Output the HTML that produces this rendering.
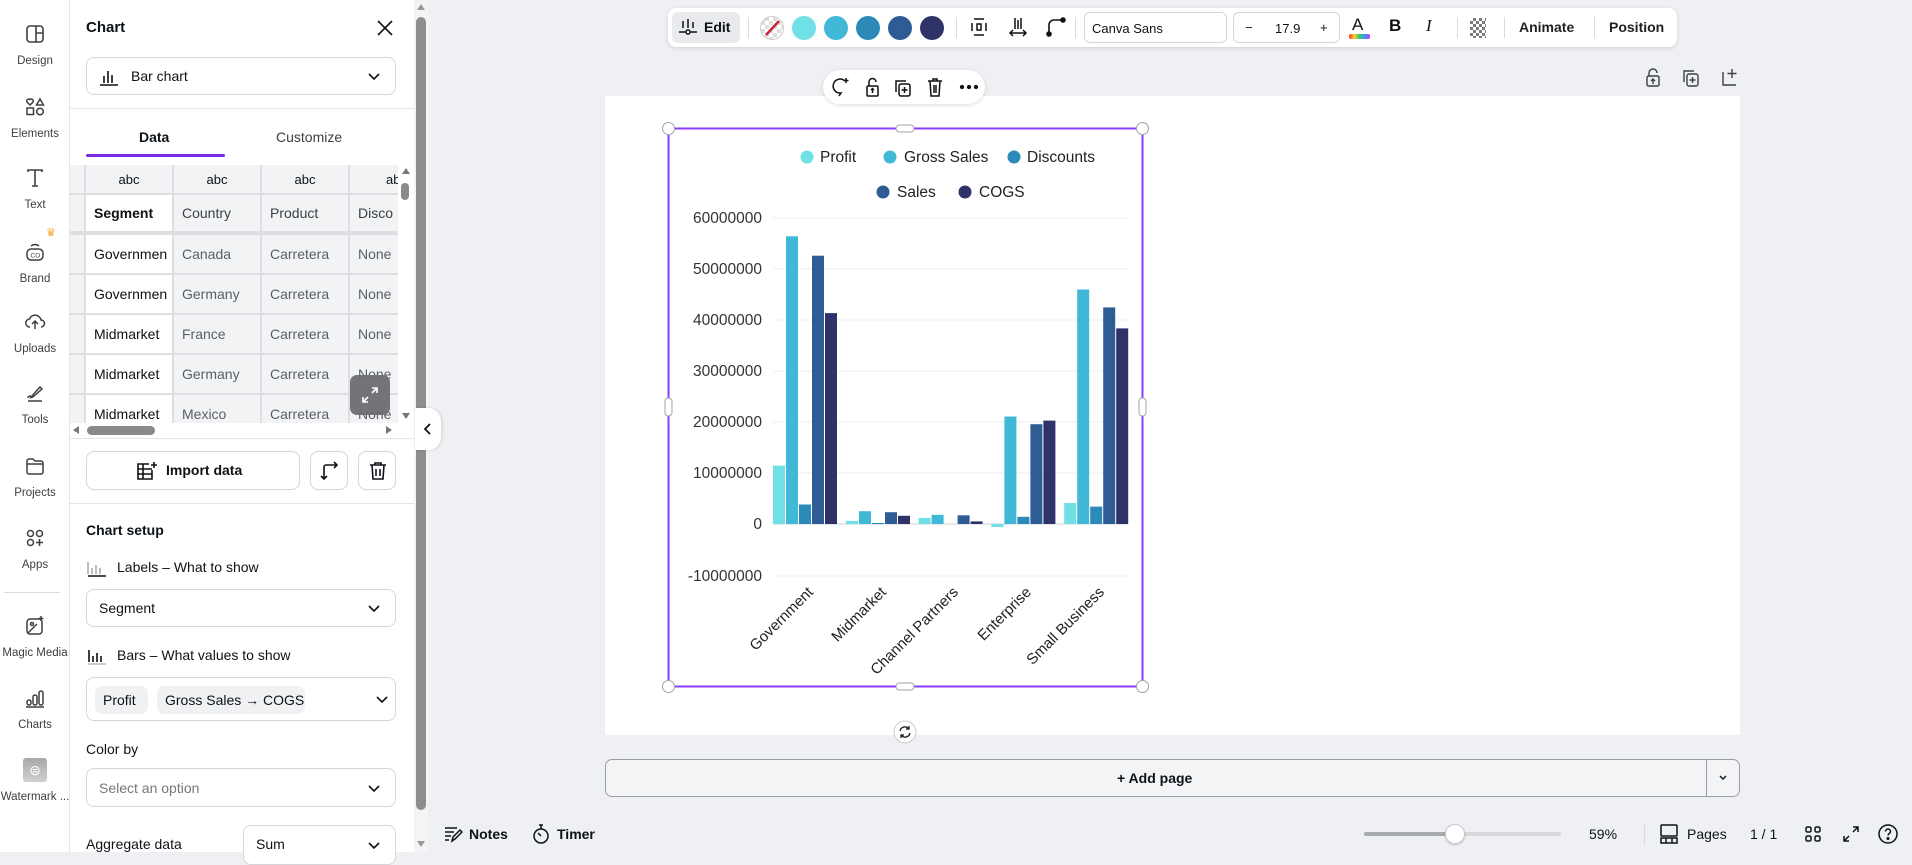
<!DOCTYPE html>
<html><head><meta charset="utf-8">
<style>
*{box-sizing:border-box;margin:0;padding:0}
body{width:1912px;height:852px;overflow:hidden;background:#eef0f3;font-family:"Liberation Sans",sans-serif;color:#0d1216;position:relative}
.abs{position:absolute}
.rail{left:0;top:0;width:70px;height:852px;background:#fff;border-right:1px solid #e3e5e8}
.ri{position:absolute;left:0;width:70px;text-align:center;font-size:11.5px;color:#3c4043}
.ri svg{display:block;margin:0 auto 9px}
.panel{left:70px;top:0;width:358px;height:852px;background:#fff}
.dd{position:absolute;border:1px solid #d4d6da;border-radius:8px;background:#fff;font-size:14px}
.chev{position:absolute;right:14px;top:50%;margin-top:-5px}
.tbl{position:absolute;left:70px;top:165px;width:328px;height:258px;overflow:hidden;background:#f2f3f5}
.cell{position:absolute;border-right:2px solid #dcdee2;border-bottom:2px solid #dcdee2;font-size:14px;color:#5a5f66;padding-left:8px;display:flex;align-items:center;white-space:nowrap;overflow:hidden}
.btn{position:absolute;border:1px solid #d4d6da;border-radius:8px;background:#fff}
.lbl{position:absolute;font-size:14px;color:#0d1216}
.tb{left:668px;top:8px;width:1009px;height:39px;background:#fff;border-radius:8px;box-shadow:0 1px 4px rgba(0,0,0,.15)}
.sw{position:absolute;top:16px;width:24px;height:24px;border-radius:50%}
.sep{position:absolute;top:17px;width:1px;height:21px;background:#d8dadd}
.t{position:absolute;font-size:14px;color:#0d1216}
</style></head><body>

<div class="abs rail">
 <div class="ri" style="top:22px"><svg width="24" height="24" viewBox="0 0 24 24" fill="none" stroke="#3c4043" stroke-width="1.6"><rect x="4" y="4" width="16" height="16" rx="3"/><path d="M13 4v16M13 11h7"/></svg>Design</div>
 <div class="ri" style="top:95px"><svg width="24" height="24" viewBox="0 0 24 24" fill="none" stroke="#3c4043" stroke-width="1.5"><path d="M7 10l-3-3a2 2 0 013-2.5A2 2 0 0110 7z"/><path d="M17 4l3.5 6h-7z"/><rect x="4" y="13" width="6.5" height="6.5"/><circle cx="17" cy="16.5" r="3.3"/></svg>Elements</div>
 <div class="ri" style="top:166px"><svg width="24" height="24" viewBox="0 0 24 24" fill="none" stroke="#3c4043" stroke-width="1.6"><path d="M5 6V4h14v2M12 4v16M9 20h6"/></svg>Text</div>
 <div class="ri" style="top:240px"><svg width="24" height="24" viewBox="0 0 24 24" fill="none" stroke="#3c4043" stroke-width="1.5"><rect x="4" y="9" width="16" height="11" rx="4"/><path d="M8 6a6 6 0 018 0"/><text x="7.5" y="17.5" font-size="6.5" fill="#3c4043" stroke="none" font-family="Liberation Sans">CO</text></svg>Brand</div>
 <div class="abs" style="left:46px;top:226px;color:#f5a623;font-size:11px">♛</div>
 <div class="ri" style="top:310px"><svg width="24" height="24" viewBox="0 0 24 24" fill="none" stroke="#3c4043" stroke-width="1.5"><path d="M7 17a4 4 0 01-.5-8 6 6 0 0111.5 1 3.5 3.5 0 010 7M12 19v-7M9 14l3-3 3 3"/></svg>Uploads</div>
 <div class="ri" style="top:381px"><svg width="24" height="24" viewBox="0 0 24 24" fill="none" stroke="#3c4043" stroke-width="1.5"><path d="M9 15l8-9 2 2-9 8-2 .5zM5 20h14M5 17c0-2 2-2 3-2"/></svg>Tools</div>
 <div class="ri" style="top:454px"><svg width="24" height="24" viewBox="0 0 24 24" fill="none" stroke="#3c4043" stroke-width="1.5"><path d="M4 7a2 2 0 012-2h4l2 2h6a2 2 0 012 2v9a2 2 0 01-2 2H6a2 2 0 01-2-2zM4 10h16"/></svg>Projects</div>
 <div class="ri" style="top:526px"><svg width="24" height="24" viewBox="0 0 24 24" fill="none" stroke="#3c4043" stroke-width="1.5"><circle cx="7.5" cy="7.5" r="3"/><circle cx="16.5" cy="7.5" r="3"/><circle cx="7.5" cy="16.5" r="3"/><path d="M16.5 13v7M13 16.5h7"/></svg>Apps</div>
 <div class="abs" style="left:4px;top:592px;width:56px;height:1px;background:#d8dadd"></div>
 <div class="ri" style="top:614px"><svg width="24" height="24" viewBox="0 0 24 24" fill="none" stroke="#3c4043" stroke-width="1.5"><rect x="4" y="5" width="15" height="15" rx="3"/><circle cx="9" cy="10" r="1.5"/><path d="M5 19l9-9M18 2v5M15.5 4.5h5"/></svg>Magic Media</div>
 <div class="ri" style="top:686px"><svg width="24" height="24" viewBox="0 0 24 24" fill="none" stroke="#3c4043" stroke-width="1.5"><rect x="4" y="14" width="4" height="5" rx="2"/><rect x="10" y="9" width="4" height="10" rx="2"/><rect x="16" y="5" width="4" height="14" rx="2"/><path d="M3 21h18"/></svg>Charts</div>
 <div class="ri" style="top:758px"><div style="width:24px;height:24px;margin:0 auto 9px;background:linear-gradient(#a8a8a8,#d0d0d0);border-radius:3px;color:#fff;font-size:14px;line-height:24px">⊜</div>Watermark ...</div>
</div>

<div class="abs panel"></div>
<div class="t" style="left:86px;top:19px;font-weight:bold;font-size:15px">Chart</div>
<svg class="abs" style="left:376px;top:19px" width="18" height="18" viewBox="0 0 18 18" stroke="#0d1216" stroke-width="1.6"><path d="M2 2l14 14M16 2L2 16"/></svg>
<div class="dd" style="left:86px;top:57px;width:310px;height:38px">
 <svg class="abs" style="left:12px;top:10px" width="20" height="18" viewBox="0 0 20 18" stroke="#0d1216" stroke-width="1.6" fill="none"><path d="M1 17h18M5 15V8M9 15V3M13 15V7"/></svg>
 <span class="abs" style="left:44px;top:10px">Bar chart</span>
 <svg class="chev" width="14" height="10" viewBox="0 0 14 10" fill="none" stroke="#0d1216" stroke-width="1.6"><path d="M2 3l5 5 5-5"/></svg>
</div>
<div class="abs" style="left:70px;top:108px;width:344px;height:1px;background:#e3e5e8"></div>
<div class="t" style="left:139px;top:129px;font-weight:bold">Data</div>
<div class="t" style="left:276px;top:129px;color:#3c4043">Customize</div>
<div class="abs" style="left:86px;top:154px;width:139px;height:3px;background:#7d2ae8;border-radius:2px"></div>

<div class="tbl">
 <div class="cell" style="left:0;top:0;width:16px;height:30px;background:#f2f3f5"></div>
 <div class="cell" style="left:16px;top:0;width:88px;height:30px;justify-content:center;padding:0;color:#0d1216;font-size:13px">abc</div>
 <div class="cell" style="left:104px;top:0;width:88px;height:30px;justify-content:center;padding:0;color:#0d1216;font-size:13px">abc</div>
 <div class="cell" style="left:192px;top:0;width:88px;height:30px;justify-content:center;padding:0;color:#0d1216;font-size:13px">abc</div>
 <div class="cell" style="left:280px;top:0;width:60px;height:30px;justify-content:flex-start;padding-left:36px;color:#0d1216;font-size:13px">ab</div>
 <div class="cell" style="left:0;top:30px;width:16px;height:38px"></div>
 <div class="cell" style="left:16px;top:30px;width:88px;height:38px;background:#fff;color:#0d1216;font-weight:bold">Segment</div>
 <div class="cell" style="left:104px;top:30px;width:88px;height:38px;color:#3c4043">Country</div>
 <div class="cell" style="left:192px;top:30px;width:88px;height:38px;color:#3c4043">Product</div>
 <div class="cell" style="left:280px;top:30px;width:60px;height:38px;color:#3c4043">Disco</div>
 <div class="abs" style="left:0;top:68px;width:340px;height:2px;background:#dcdee2"></div>
 <div class="cell" style="left:0;top:70px;width:16px;height:40px"></div><div class="cell" style="left:16px;top:70px;width:88px;height:40px;background:#fff;color:#0d1216">Governmen</div><div class="cell" style="left:104px;top:70px;width:88px;height:40px">Canada</div><div class="cell" style="left:192px;top:70px;width:88px;height:40px">Carretera</div><div class="cell" style="left:280px;top:70px;width:60px;height:40px">None</div>
 <div class="cell" style="left:0;top:110px;width:16px;height:40px"></div><div class="cell" style="left:16px;top:110px;width:88px;height:40px;background:#fff;color:#0d1216">Governmen</div><div class="cell" style="left:104px;top:110px;width:88px;height:40px">Germany</div><div class="cell" style="left:192px;top:110px;width:88px;height:40px">Carretera</div><div class="cell" style="left:280px;top:110px;width:60px;height:40px">None</div>
 <div class="cell" style="left:0;top:150px;width:16px;height:40px"></div><div class="cell" style="left:16px;top:150px;width:88px;height:40px;background:#fff;color:#0d1216">Midmarket</div><div class="cell" style="left:104px;top:150px;width:88px;height:40px">France</div><div class="cell" style="left:192px;top:150px;width:88px;height:40px">Carretera</div><div class="cell" style="left:280px;top:150px;width:60px;height:40px">None</div>
 <div class="cell" style="left:0;top:190px;width:16px;height:40px"></div><div class="cell" style="left:16px;top:190px;width:88px;height:40px;background:#fff;color:#0d1216">Midmarket</div><div class="cell" style="left:104px;top:190px;width:88px;height:40px">Germany</div><div class="cell" style="left:192px;top:190px;width:88px;height:40px">Carretera</div><div class="cell" style="left:280px;top:190px;width:60px;height:40px">None</div>
 <div class="cell" style="left:0;top:230px;width:16px;height:40px"></div><div class="cell" style="left:16px;top:230px;width:88px;height:40px;background:#fff;color:#0d1216">Midmarket</div><div class="cell" style="left:104px;top:230px;width:88px;height:40px">Mexico</div><div class="cell" style="left:192px;top:230px;width:88px;height:40px">Carretera</div><div class="cell" style="left:280px;top:230px;width:60px;height:40px">None</div>
</div>
<div class="abs" style="left:398px;top:165px;width:16px;height:258px;background:#fff"></div>
<div class="abs" style="left:402px;top:168px;width:0;height:0;border:4px solid transparent;border-bottom:6px solid #777;border-top:0"></div>
<div class="abs" style="left:401px;top:183px;width:8px;height:17px;border-radius:4px;background:#8a8a8a"></div>
<div class="abs" style="left:402px;top:413px;width:0;height:0;border:4px solid transparent;border-top:6px solid #777;border-bottom:0"></div>
<div class="abs" style="left:350px;top:375px;width:40px;height:40px;border-radius:7px;background:#6b6d70;opacity:.95"></div>
<svg class="abs" style="left:361px;top:386px" width="18" height="18" viewBox="0 0 18 18" stroke="#fff" stroke-width="1.6" fill="none"><path d="M11 2h5v5M16 2l-5 5M7 16H2v-5M2 16l5-5"/></svg>
<div class="abs" style="left:70px;top:423px;width:344px;height:15px;background:#fff"></div>
<div class="abs" style="left:73px;top:426px;border:4px solid transparent;border-right:6px solid #777;border-left:0"></div>
<div class="abs" style="left:87px;top:426px;width:68px;height:9px;border-radius:5px;background:#8a8a8a"></div>
<div class="abs" style="left:386px;top:426px;border:4px solid transparent;border-left:6px solid #777;border-right:0"></div>
<div class="abs" style="left:70px;top:438px;width:344px;height:1px;background:#e3e5e8"></div>

<div class="btn" style="left:86px;top:451px;width:214px;height:39px">
 <svg class="abs" style="left:49px;top:9px" width="22" height="20" viewBox="0 0 22 20" fill="none" stroke="#0d1216" stroke-width="1.6"><path d="M13 3H2v15h14V9M2 8h14M2 13h14M7 3v15"/><path d="M18 1v6M15 4h6"/></svg>
 <span class="abs" style="left:79px;top:10px;font-weight:bold;font-size:14px">Import data</span>
</div>
<div class="btn" style="left:310px;top:451px;width:38px;height:39px"><svg class="abs" style="left:9px;top:9px" width="20" height="20" viewBox="0 0 20 20" fill="none" stroke="#0d1216" stroke-width="1.6"><path d="M4 18V6a2 2 0 012-2h11M14 1l3 3-3 3M1 15l3 3 3-3"/></svg></div>
<div class="btn" style="left:358px;top:451px;width:38px;height:39px"><svg class="abs" style="left:10px;top:9px" width="18" height="20" viewBox="0 0 18 20" fill="none" stroke="#0d1216" stroke-width="1.6"><path d="M1 4h16M6 4V2h6v2M3 4l1 14h10l1-14M7 8v7M11 8v7"/></svg></div>
<div class="abs" style="left:70px;top:503px;width:344px;height:1px;background:#e3e5e8"></div>

<div class="t" style="left:86px;top:522px;font-weight:bold">Chart setup</div>
<svg class="abs" style="left:87px;top:559px" width="20" height="18" viewBox="0 0 20 18" fill="none" stroke="#999" stroke-width="1.3"><path d="M1 3v12M5 9v6M9 6v9M13 9v6"/><path d="M1 17h18" stroke="#0d1216" stroke-width="1.6"/></svg>
<div class="lbl" style="left:117px;top:559px">Labels – What to show</div>
<div class="dd" style="left:86px;top:589px;width:310px;height:38px"><span class="abs" style="left:12px;top:10px">Segment</span><svg class="chev" width="14" height="10" viewBox="0 0 14 10" fill="none" stroke="#0d1216" stroke-width="1.6"><path d="M2 3l5 5 5-5"/></svg></div>
<svg class="abs" style="left:87px;top:647px" width="20" height="18" viewBox="0 0 20 18" fill="none" stroke="#0d1216" stroke-width="1.6"><path d="M2 3v12M6 9v6M10 6v9M14 9v6" /><path d="M1 17h18" stroke="#bbb"/></svg>
<div class="lbl" style="left:117px;top:647px">Bars – What values to show</div>
<div class="dd" style="left:86px;top:677px;width:310px;height:44px">
 <span class="abs" style="left:8px;top:8px;width:53px;height:28px;border-radius:7px;background:#f0f1f3;padding:6px 0 0 8px">Profit</span>
 <span class="abs" style="left:70px;top:8px;width:148px;height:28px;border-radius:7px;background:#f0f1f3;padding:6px 0 0 8px;white-space:nowrap">Gross Sales → COGS</span>
 <svg class="chev" width="14" height="10" viewBox="0 0 14 10" fill="none" stroke="#0d1216" stroke-width="1.6" style="right:6px"><path d="M2 3l5 5 5-5"/></svg>
</div>
<div class="lbl" style="left:86px;top:741px">Color by</div>
<div class="dd" style="left:86px;top:768px;width:310px;height:39px"><span class="abs" style="left:12px;top:11px;color:#777">Select an option</span><svg class="chev" width="14" height="10" viewBox="0 0 14 10" fill="none" stroke="#0d1216" stroke-width="1.6"><path d="M2 3l5 5 5-5"/></svg></div>
<div class="lbl" style="left:86px;top:836px">Aggregate data</div>
<div class="dd" style="left:243px;top:825px;width:153px;height:40px"><span class="abs" style="left:12px;top:10px">Sum</span><svg class="chev" width="14" height="10" viewBox="0 0 14 10" fill="none" stroke="#0d1216" stroke-width="1.6"><path d="M2 3l5 5 5-5"/></svg></div>

<div class="abs" style="left:414px;top:0;width:14px;height:852px;background:#f4f4f4"></div>
<div class="abs" style="left:417px;top:4px;border:4px solid transparent;border-bottom:6px solid #999;border-top:0"></div>
<div class="abs" style="left:416px;top:17px;width:10px;height:793px;border-radius:5px;background:#8d8d8d"></div>
<div class="abs" style="left:417px;top:841px;border:4px solid transparent;border-top:6px solid #999;border-bottom:0"></div>
<div class="abs" style="left:415px;top:408px;width:26px;height:42px;border-radius:0 13px 13px 0;background:#fff;box-shadow:1px 0 3px rgba(0,0,0,.12)"></div>
<svg class="abs" style="left:423px;top:423px" width="10" height="12" viewBox="0 0 10 12" fill="none" stroke="#0d1216" stroke-width="1.8"><path d="M7 1L2 6l5 5"/></svg>

<div class="abs tb"></div>
<div class="abs" style="left:672px;top:12px;width:68px;height:31px;border-radius:6px;background:#e8eaed"></div>
<svg class="abs" style="left:678px;top:17px" width="20" height="20" viewBox="0 0 20 20" fill="none" stroke="#0d1216" stroke-width="1.5"><path d="M5 4v7M10 2v9M15 5v6M1 15h18"/><circle cx="10" cy="15" r="2" fill="#fff"/></svg>
<div class="t" style="left:704px;top:19px;font-weight:bold;font-size:14px">Edit</div>
<div class="sep" style="left:748px"></div>
<div class="sw" style="left:760px;background:repeating-conic-gradient(#ddd 0 25%,#fff 0 50%) 0 0/8px 8px;border:1px solid #ccc"></div>
<svg class="abs" style="left:760px;top:16px" width="24" height="24"><path d="M6 19L19 5" stroke="#d0203a" stroke-width="2.5"/></svg>
<div class="sw" style="left:792px;background:#6ee0e6"></div>
<div class="sw" style="left:824px;background:#40b8d6"></div>
<div class="sw" style="left:856px;background:#2b8ab8"></div>
<div class="sw" style="left:888px;background:#2e5d96"></div>
<div class="sw" style="left:920px;background:#2f3269"></div>
<div class="sep" style="left:956px"></div>
<svg class="abs" style="left:969px;top:17px" width="20" height="20" viewBox="0 0 20 20" fill="none" stroke="#0d1216" stroke-width="1.5"><path d="M5 2h10M5 18h10M3 6v8M17 6v8"/><rect x="8" y="7" width="4" height="6"/></svg>
<svg class="abs" style="left:1008px;top:17px" width="20" height="20" viewBox="0 0 20 20" fill="none" stroke="#0d1216" stroke-width="1.5"><path d="M7 1v11M10 3v9M13 1v11M2 16h16M5 13l-3 3 3 3M15 13l3 3-3 3"/></svg>
<svg class="abs" style="left:1045px;top:16px" width="22" height="22" viewBox="0 0 22 22" fill="none" stroke="#0d1216" stroke-width="1.6"><path d="M4 18V9a5 5 0 015-5h7"/><circle cx="4" cy="18" r="2" fill="#0d1216"/><circle cx="18" cy="4" r="2" fill="#0d1216"/></svg>
<div class="sep" style="left:1075px"></div>
<div class="abs" style="left:1084px;top:12px;width:143px;height:31px;border:1px solid #d4d6da;border-radius:6px;font-size:13px;padding:8px 0 0 7px">Canva Sans</div>
<div class="abs" style="left:1233px;top:12px;width:107px;height:31px;border:1px solid #d4d6da;border-radius:6px;font-size:13px"><span class="abs" style="left:11px;top:7px">−</span><span class="abs" style="left:41px;top:8px">17.9</span><span class="abs" style="left:86px;top:7px">+</span></div>
<div class="t" style="left:1352px;top:15px;font-size:17px">A</div>
<div class="abs" style="left:1349px;top:34px;width:21px;height:5px;border-radius:2px;background:linear-gradient(90deg,#f33,#fc3,#3c6,#39f,#c3f)"></div>
<div class="t" style="left:1389px;top:16px;font-size:17px;font-weight:bold">B</div>
<div class="t" style="left:1426px;top:16px;font-size:17px;font-style:italic;font-family:'Liberation Serif',serif">I</div>
<div class="sep" style="left:1457px"></div>
<div class="abs" style="left:1470px;top:18px;width:16px;height:20px;background:repeating-conic-gradient(#444 0 25%,#fff 0 50%) 0 0/6px 6px;opacity:.7"></div>
<div class="sep" style="left:1504px"></div>
<div class="t" style="left:1519px;top:19px;font-size:14px;font-weight:bold;color:#222">Animate</div>
<div class="sep" style="left:1594px"></div>
<div class="t" style="left:1609px;top:19px;font-size:14px;font-weight:bold;color:#222">Position</div>

<div class="abs" style="left:605px;top:96px;width:1135px;height:639px;background:#fff"></div>
<div class="abs" style="left:823px;top:70px;width:162px;height:34px;border-radius:17px;background:#fff;box-shadow:0 1px 4px rgba(0,0,0,.15)"></div>
<svg class="abs" style="left:830px;top:76px" width="150" height="22" viewBox="0 0 150 22" fill="none" stroke="#0d1216" stroke-width="1.5">
 <path d="M15 5a7 7 0 10-4 12l-2 3M16 2v5M13.5 4.5h5"/>
 <rect x="37" y="10" width="11" height="10" rx="1"/><path d="M39 10V6a3.5 3.5 0 017 0M42.5 17v-4M41 14l1.5-1.5L44 14"/>
 <rect x="69" y="8" width="11" height="12" rx="2"/><path d="M66 16V5h10M74.5 11v6M71.5 14h6"/>
 <path d="M98 5h14M103 5V3h4v2M100 5l1 15h8l1-15M104 9v8M106 9v8"/>
 <circle cx="132" cy="11" r="1.4" fill="#0d1216"/><circle cx="139" cy="11" r="1.4" fill="#0d1216"/><circle cx="146" cy="11" r="1.4" fill="#0d1216"/>
</svg>
<svg class="abs" style="left:1642px;top:67px" width="100" height="22" viewBox="0 0 100 22" fill="none" stroke="#3c4043" stroke-width="1.4">
 <rect x="5" y="9" width="12" height="10" rx="1.5"/><path d="M7 9V6a4 4 0 018 0M11 17v-5M9 14l2-2 2 2"/>
 <rect x="45" y="7" width="11" height="12" rx="2"/><path d="M42 15V4h10M50.5 10v6M47.5 13h6"/>
 <path d="M81 5v13h13M90 2v9M85.5 6.5h9"/>
</svg>

<svg class="abs" style="left:0;top:0" width="1912" height="852">
 <g stroke="#ececee" stroke-width="1">
  <path d="M773 218H1128M773 269H1128M773 320H1128M773 371H1128M773 422H1128M773 473H1128M773 576H1128"/>
 </g>
 <path d="M773 524H1128" stroke="#cfd1d4"/>
 <g font-family="Liberation Sans,sans-serif" font-size="15.5" fill="#333" text-anchor="end">
  <text x="762" y="223">60000000</text><text x="762" y="274">50000000</text><text x="762" y="325">40000000</text><text x="762" y="376">30000000</text><text x="762" y="427">20000000</text><text x="762" y="478">10000000</text><text x="762" y="529">0</text><text x="762" y="581">-10000000</text>
 </g>
 <g>
  <rect x="773" y="465.6" width="12" height="58.4" fill="#6ee0e6"/><rect x="786" y="236.3" width="12" height="287.7" fill="#40b8d6"/><rect x="799" y="504.5" width="12" height="19.5" fill="#2b8ab8"/><rect x="812" y="255.7" width="12" height="268.3" fill="#2e5d96"/><rect x="825" y="313.1" width="12" height="210.9" fill="#2f3269"/>
  <rect x="846" y="520.9" width="12" height="3.1" fill="#6ee0e6"/><rect x="859" y="511.2" width="12" height="12.8" fill="#40b8d6"/><rect x="872" y="523" width="12" height="1" fill="#2b8ab8"/><rect x="885" y="512.2" width="12" height="11.8" fill="#2e5d96"/><rect x="898" y="515.8" width="12" height="8.2" fill="#2f3269"/>
  <rect x="918.6" y="517.9" width="12" height="6.1" fill="#6ee0e6"/><rect x="931.6" y="514.8" width="12" height="9.2" fill="#40b8d6"/><rect x="957.6" y="515.3" width="12" height="8.7" fill="#2e5d96"/><rect x="970.6" y="521.4" width="12" height="2.6" fill="#2f3269"/>
  <rect x="991.4" y="524" width="12" height="3.1" fill="#6ee0e6"/><rect x="1004.4" y="416.5" width="12" height="107.5" fill="#40b8d6"/><rect x="1017.4" y="516.8" width="12" height="7.2" fill="#2b8ab8"/><rect x="1030.4" y="424.2" width="12" height="99.8" fill="#2e5d96"/><rect x="1043.4" y="420.6" width="12" height="103.4" fill="#2f3269"/>
  <rect x="1064.2" y="503" width="12" height="21" fill="#6ee0e6"/><rect x="1077.2" y="289.5" width="12" height="234.5" fill="#40b8d6"/><rect x="1090.2" y="506.6" width="12" height="17.4" fill="#2b8ab8"/><rect x="1103.2" y="307.4" width="12" height="216.6" fill="#2e5d96"/><rect x="1116.2" y="328.4" width="12" height="195.6" fill="#2f3269"/>
 </g>
 <g font-family="Liberation Sans,sans-serif" font-size="15" fill="#222" text-anchor="end">
  <text transform="translate(814,593) rotate(-45)">Government</text>
  <text transform="translate(887,593) rotate(-45)">Midmarket</text>
  <text transform="translate(959,593) rotate(-45)">Channel Partners</text>
  <text transform="translate(1032,593) rotate(-45)">Enterprise</text>
  <text transform="translate(1105,593) rotate(-45)">Small Business</text>
 </g>
 <g font-family="Liberation Sans,sans-serif" font-size="15.5" fill="#222">
  <circle cx="807" cy="157" r="6.5" fill="#6ee0e6"/><text x="820" y="162">Profit</text>
  <circle cx="890" cy="157" r="6.5" fill="#40b8d6"/><text x="904" y="162">Gross Sales</text>
  <circle cx="1014" cy="157" r="6.5" fill="#2b8ab8"/><text x="1027" y="162">Discounts</text>
  <circle cx="883" cy="192" r="6.5" fill="#2e5d96"/><text x="897" y="197">Sales</text>
  <circle cx="965" cy="192" r="6.5" fill="#2f3269"/><text x="979" y="197">COGS</text>
 </g>
 <rect x="668.5" y="128.5" width="474" height="558" fill="none" stroke="#8b3dff" stroke-width="2"/>
 <g fill="#fff" stroke="#a0a4aa" stroke-width="1">
  <circle cx="668.5" cy="128.5" r="6"/><circle cx="1142.5" cy="128.5" r="6"/><circle cx="668.5" cy="686.5" r="6"/><circle cx="1142.5" cy="686.5" r="6"/>
  <rect x="896" y="125" width="18" height="7" rx="3.5"/><rect x="896" y="683" width="18" height="7" rx="3.5"/>
  <rect x="665" y="398" width="7" height="18" rx="3.5"/><rect x="1139" y="398" width="7" height="18" rx="3.5"/>
  <circle cx="905" cy="732" r="11" stroke="#ccc"/>
 </g>
 <path d="M900 731a5 5 0 019-2M910 733a5 5 0 01-9 2M909 726v3h-3M901 738v-3h3" fill="none" stroke="#0d1216" stroke-width="1.2"/>
</svg>

<div class="abs" style="left:605px;top:759px;width:1135px;height:38px;border:1px solid #9a9da2;border-radius:7px;background:#f3f4f6"></div>
<div class="abs" style="left:1706px;top:760px;width:1px;height:36px;background:#9a9da2"></div>
<div class="t" style="left:1117px;top:770px;font-size:14px;font-weight:bold">+ Add page</div>
<svg class="abs" style="left:1718px;top:774px" width="10" height="8" viewBox="0 0 10 8" fill="none" stroke="#0d1216" stroke-width="1.4"><path d="M2 2l3 3 3-3"/></svg>

<svg class="abs" style="left:443px;top:824px" width="20" height="20" viewBox="0 0 20 20" fill="none" stroke="#0d1216" stroke-width="1.5"><path d="M2 4h12M2 8h9M2 12h6M2 16h4M9 17l1-4 7-7 2 2-7 7z"/></svg>
<div class="t" style="left:469px;top:826px;font-weight:bold">Notes</div>
<svg class="abs" style="left:531px;top:823px" width="20" height="22" viewBox="0 0 20 22" fill="none" stroke="#0d1216" stroke-width="1.5"><circle cx="10" cy="13" r="7"/><path d="M8 2h4M10 2v4M10 13l-3-3"/></svg>
<div class="t" style="left:557px;top:826px;font-weight:bold">Timer</div>
<div class="abs" style="left:1364px;top:832px;width:197px;height:4px;border-radius:2px;background:#d6d8db"></div>
<div class="abs" style="left:1364px;top:832px;width:90px;height:4px;border-radius:2px;background:#a6a9ae"></div>
<div class="abs" style="left:1445px;top:824px;width:20px;height:20px;border-radius:50%;background:#fff;border:1px solid #c8cbd0;box-shadow:0 1px 2px rgba(0,0,0,.2)"></div>
<div class="t" style="left:1589px;top:826px">59%</div>
<div class="abs" style="left:1644px;top:823px;width:1px;height:22px;background:#d8dadd"></div>
<svg class="abs" style="left:1659px;top:823px" width="20" height="22" viewBox="0 0 20 22" fill="none" stroke="#0d1216" stroke-width="1.5"><rect x="2" y="2" width="16" height="11" rx="1"/><rect x="2" y="15" width="16" height="5"/><path d="M7 15v5M13 15v5"/></svg>
<div class="t" style="left:1687px;top:826px">Pages</div>
<div class="t" style="left:1750px;top:826px">1 / 1</div>
<svg class="abs" style="left:1804px;top:825px" width="18" height="18" viewBox="0 0 18 18" fill="none" stroke="#0d1216" stroke-width="1.5"><rect x="2" y="2" width="5" height="5" rx="1.5"/><rect x="11" y="2" width="5" height="5" rx="1.5"/><rect x="2" y="11" width="5" height="5" rx="1.5"/><rect x="11" y="11" width="5" height="5" rx="1.5"/></svg>
<svg class="abs" style="left:1842px;top:825px" width="18" height="18" viewBox="0 0 18 18" fill="none" stroke="#0d1216" stroke-width="1.5"><path d="M11 2h5v5M16 2l-5 5M7 16H2v-5M2 16l5-5"/></svg>
<svg class="abs" style="left:1877px;top:823px" width="22" height="22" viewBox="0 0 22 22" fill="none" stroke="#0d1216" stroke-width="1.5"><circle cx="11" cy="11" r="9"/><path d="M8.5 8.5a2.5 2.5 0 115 0c0 2-2.5 2-2.5 4"/><circle cx="11" cy="15.5" r=".8" fill="#0d1216"/></svg>
</body></html>
